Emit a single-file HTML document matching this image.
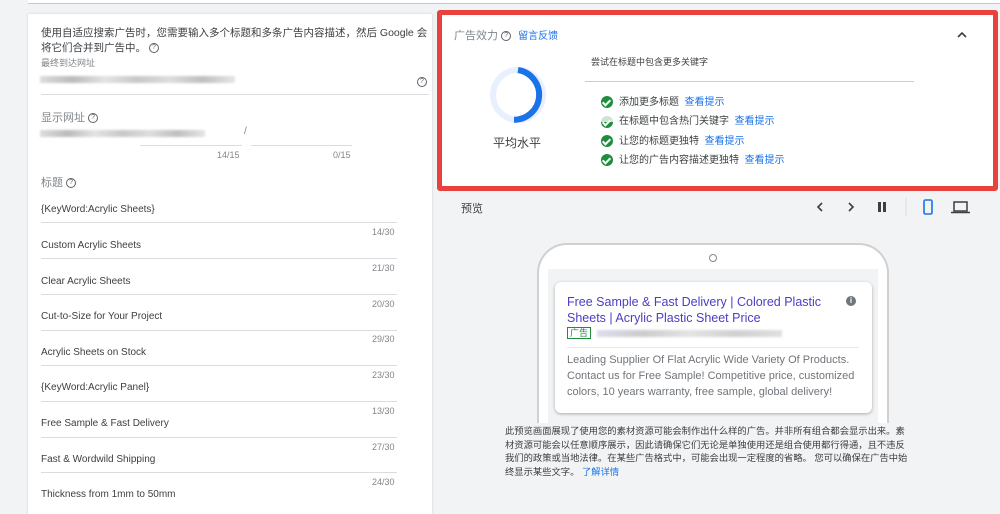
<!DOCTYPE html>
<html><head><meta charset="utf-8"><style>
*{margin:0;padding:0;box-sizing:border-box}
body{width:1000px;height:503px;overflow:hidden;background:#f1f3f4;font-family:"Liberation Sans","Noto Sans CJK SC",sans-serif;position:relative;color:#3c4043}
.a{position:absolute;white-space:nowrap}
.t{font-size:11px;color:#3c4043}
.g{color:#80868b}
.ln{position:absolute;height:1px;background:#dadce0}
.q{display:inline-block;width:10px;height:10px;border:1px solid #5f6368;border-radius:50%;font-size:7px;line-height:8px;text-align:center;color:#5f6368;vertical-align:middle}
.blur{position:absolute;height:7px;background:linear-gradient(90deg,#ddd,#bbb,#e3e3e3,#c8c8c8,#ddd,#bfbfbf,#e6e6e6);filter:blur(1px)}
.chk{display:inline-block;width:12px;height:12px;border-radius:50%;background:#1e8e3e;vertical-align:middle;margin-right:6px;position:relative}
.chk:after{content:"";position:absolute;left:3px;top:2px;width:3px;height:6px;border:solid #fff;border-width:0 2px 2px 0;transform:rotate(45deg)}
.lk{color:#1a73e8}
</style></head><body>
<div style="position:absolute;left:28px;top:0;width:976px;height:4px;background:#fff;border-bottom:1px solid #c8c8c8"></div>
<div style="position:absolute;left:28px;top:14px;width:404px;height:500px;background:#fff;box-shadow:0 0 2px #ccc"></div>
<div class="a t" style="left:41px;top:26px;line-height:15px;font-size:10.5px">使用自适应搜索广告时，您需要输入多个标题和多条广告内容描述，然后 Google 会<br>将它们合并到广告中。 <span class="q">?</span></div>
<div class="a g" style="left:41px;top:56px;font-size:9px">最终到达网址</div>
<div class="blur" style="left:40px;top:76px;width:195px"></div>
<div class="a" style="left:417px;top:73px"><span class="q">?</span></div>
<div class="ln" style="left:41px;top:94px;width:388px"></div>
<div class="a g" style="left:41px;top:109px;font-size:11px">显示网址 <span class="q">?</span></div>
<div class="blur" style="left:40px;top:130px;width:165px"></div>
<div class="a g" style="left:244px;top:126px;font-size:10px">/</div>
<div class="ln" style="left:140px;top:145px;width:102px"></div>
<div class="ln" style="left:251px;top:145px;width:101px"></div>
<div class="a g" style="left:217px;top:150px;font-size:9px">14/15</div>
<div class="a g" style="left:333px;top:150px;font-size:9px">0/15</div>
<div class="a g" style="left:41px;top:174px;font-size:11px">标题 <span class="q">?</span></div>
<div class="a t" style="left:41px;top:204px;font-size:10px">{KeyWord:Acrylic Sheets}</div><div class="ln" style="left:41px;top:222px;width:356px"></div><div class="a g" style="left:372px;top:227px;font-size:9px">14/30</div>
<div class="a t" style="left:41px;top:240px;font-size:10px">Custom Acrylic Sheets</div><div class="ln" style="left:41px;top:258px;width:356px"></div><div class="a g" style="left:372px;top:263px;font-size:9px">21/30</div>
<div class="a t" style="left:41px;top:276px;font-size:10px">Clear Acrylic Sheets</div><div class="ln" style="left:41px;top:294px;width:356px"></div><div class="a g" style="left:372px;top:299px;font-size:9px">20/30</div>
<div class="a t" style="left:41px;top:311px;font-size:10px">Cut-to-Size for Your Project</div><div class="ln" style="left:41px;top:330px;width:356px"></div><div class="a g" style="left:372px;top:334px;font-size:9px">29/30</div>
<div class="a t" style="left:41px;top:347px;font-size:10px">Acrylic Sheets on Stock</div><div class="ln" style="left:41px;top:365px;width:356px"></div><div class="a g" style="left:372px;top:370px;font-size:9px">23/30</div>
<div class="a t" style="left:41px;top:382px;font-size:10px">{KeyWord:Acrylic Panel}</div><div class="ln" style="left:41px;top:401px;width:356px"></div><div class="a g" style="left:372px;top:406px;font-size:9px">13/30</div>
<div class="a t" style="left:41px;top:418px;font-size:10px">Free Sample &amp; Fast Delivery</div><div class="ln" style="left:41px;top:437px;width:356px"></div><div class="a g" style="left:372px;top:442px;font-size:9px">27/30</div>
<div class="a t" style="left:41px;top:454px;font-size:10px">Fast &amp; Wordwild Shipping</div><div class="ln" style="left:41px;top:472px;width:356px"></div><div class="a g" style="left:372px;top:477px;font-size:9px">24/30</div>
<div class="a t" style="left:41px;top:489px;font-size:10px">Thickness from 1mm to 50mm</div>

<div style="position:absolute;left:437px;top:10px;width:561px;height:181px;border:5px solid #e8423f;border-radius:3px;background:#fff"></div>
<div class="a g" style="left:454px;top:27px;font-size:11px">广告效力 <span class="q">?</span> <span class="lk" style="font-size:10px;margin-left:4px">留言反馈</span></div>
<svg class="a" style="left:956px;top:31px" width="12" height="8"><path d="M2 6L6 2L10 6" stroke="#3c4043" stroke-width="1.6" fill="none"/></svg>
<svg class="a" style="left:487px;top:64px" width="62" height="62"><circle cx="31" cy="31" r="25" stroke="#e8f0fe" stroke-width="6" fill="none"/><path d="M31 6A25 25 0 0 1 27 55.7" stroke="#1a73e8" stroke-width="6" fill="none"/></svg>
<div class="a t" style="left:493px;top:134px;font-size:12px">平均水平</div>
<div class="a t" style="left:591px;top:55px;font-size:9px">尝试在标题中包含更多关键字</div>
<div class="ln" style="left:585px;top:81px;width:329px;background:#ccc"></div>
<div class="a t" style="left:601px;top:93px;font-size:10px;line-height:19.3px">
<div><span class="chk"></span>添加更多标题 <span class="lk">&nbsp;查看提示</span></div>
<div><span class="chk" style="background:linear-gradient(#cfe3d4 50%,#1e8e3e 50%)"></span>在标题中包含热门关键字 <span class="lk">&nbsp;查看提示</span></div>
<div><span class="chk"></span>让您的标题更独特 <span class="lk">&nbsp;查看提示</span></div>
<div><span class="chk"></span>让您的广告内容描述更独特 <span class="lk">&nbsp;查看提示</span></div>
</div>

<div class="a t" style="left:461px;top:200px;font-size:11px">预览</div>
<svg class="a" style="left:812px;top:198px" width="160" height="18"><path d="M10 5L6 9L10 13" stroke="#3c4043" stroke-width="1.6" fill="none"/><path d="M37 5L41 9L37 13" stroke="#3c4043" stroke-width="1.6" fill="none"/><rect x="66" y="4" width="3" height="10" fill="#3c4043"/><rect x="71" y="4" width="3" height="10" fill="#3c4043"/><line x1="94" y1="0" x2="94" y2="18" stroke="#dadce0"/><rect x="112" y="2" width="8" height="14" rx="1.5" stroke="#1a73e8" stroke-width="1.6" fill="none"/><rect x="142" y="4" width="13" height="9" stroke="#3c4043" stroke-width="1.5" fill="none"/><line x1="139" y1="14.5" x2="158" y2="14.5" stroke="#3c4043" stroke-width="1.5"/></svg>

<div style="position:absolute;left:537px;top:243px;width:352px;height:180px;border:2px solid #d0d0d0;border-bottom:none;border-radius:30px 30px 0 0;background:#fff"></div>
<div style="position:absolute;left:709px;top:254px;width:8px;height:8px;border:1px solid #888;border-radius:50%"></div>
<div style="position:absolute;left:548px;top:269px;width:330px;height:154px;background:#f1f3f4"></div>
<div style="position:absolute;left:555px;top:282px;width:317px;height:131px;background:#fff;border-radius:6px;box-shadow:0 1px 3px rgba(0,0,0,.3)"></div>
<div class="a" style="left:567px;top:294px;font-size:12.5px;line-height:16px;white-space:normal;width:270px"><span style="color:#4a3ec2">Free Sample &amp; Fast Delivery | Colored Plastic Sheets | Acrylic Plastic Sheet Price</span></div>
<div style="position:absolute;left:846px;top:296px;width:10px;height:10px;border-radius:50%;background:#70757a;color:#fff;font-size:8px;line-height:10px;text-align:center;font-weight:bold">i</div>
<div class="a" style="left:567px;top:327px;font-size:9px;color:#1e8e3e;border:1px solid #1e8e3e;padding:0 2px;line-height:10px">广告</div>
<div class="blur" style="left:597px;top:330px;width:185px;background:linear-gradient(90deg,#dde,#ccc,#e4e4e4,#d0d0d0,#e0e0e0)"></div>
<div class="ln" style="left:567px;top:347px;width:292px;background:#e8e8e8"></div>
<div class="a" style="left:567px;top:352px;font-size:11px;line-height:16px;color:#70757a;white-space:normal;width:300px">Leading Supplier Of Flat Acrylic Wide Variety Of Products. Contact us for Free Sample! Competitive price, customized colors, 10 years warranty, free sample, global delivery!</div>
<div class="a" style="left:505px;top:425px;font-size:9.3px;line-height:13.5px;color:#3c4043">此预览画面展现了使用您的素材资源可能会制作出什么样的广告。并非所有组合都会显示出来。素<br>材资源可能会以任意顺序展示，因此请确保它们无论是单独使用还是组合使用都行得通，且不违反<br>我们的政策或当地法律。在某些广告格式中，可能会出现一定程度的省略。 您可以确保在广告中始<br>终显示某些文字。 <span class="lk">了解详情</span></div>
</body></html>
